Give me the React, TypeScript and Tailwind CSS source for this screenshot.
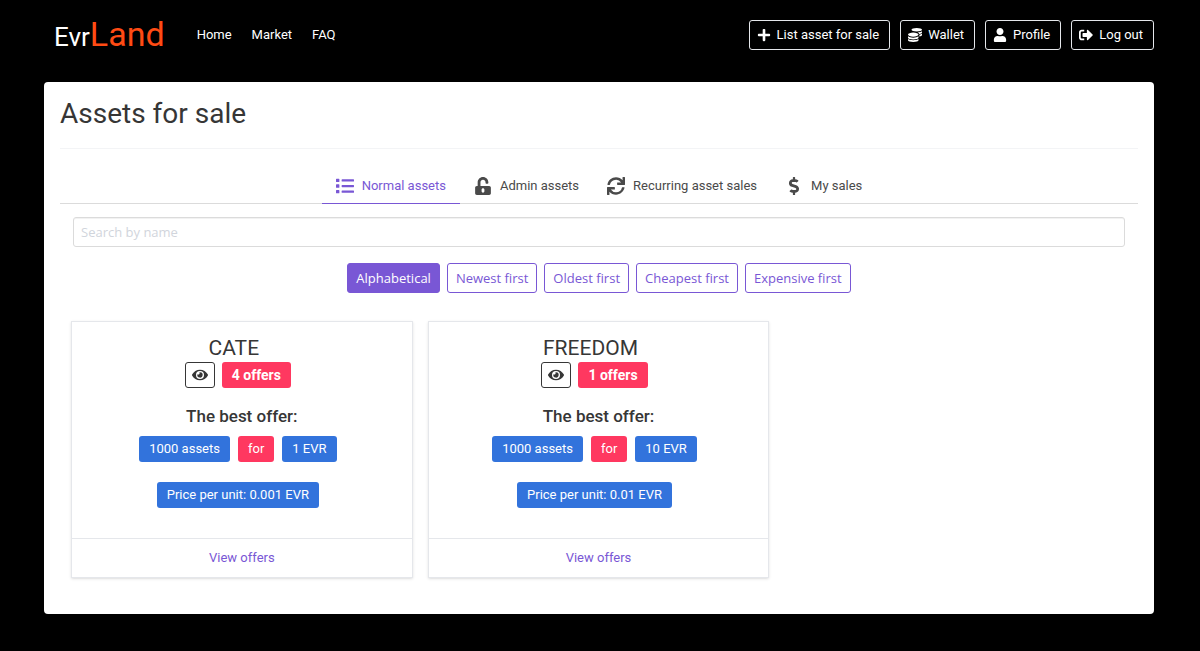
import React from 'react';
import clsx from 'clsx';
import { FaPlus, FaCoins, FaUser, FaSignOutAlt, FaList, FaUnlockAlt, FaSync, FaDollarSign, FaEye } from 'react-icons/fa';

interface Asset {
  name: string;
  offers: number;
  amount: number;
  price: number;
  unitPrice: number;
}

const assets: Asset[] = [
  { name: 'CATE', offers: 4, amount: 1000, price: 1, unitPrice: 0.001 },
  { name: 'FREEDOM', offers: 1, amount: 1000, price: 10, unitPrice: 0.01 },
];

const navLinks = ['Home', 'Market', 'FAQ'];

const actions = [
  { label: 'List asset for sale', icon: <FaPlus size={14} /> },
  { label: 'Wallet', icon: <FaCoins size={14} /> },
  { label: 'Profile', icon: <FaUser size={14} /> },
  { label: 'Log out', icon: <FaSignOutAlt size={14} /> },
];

const tabs = [
  { label: 'Normal assets', icon: <FaList size={18} /> },
  { label: 'Admin assets', icon: <FaUnlockAlt size={18} /> },
  { label: 'Recurring asset sales', icon: <FaSync size={18} /> },
  { label: 'My sales', icon: <FaDollarSign size={18} /> },
];

const sortOptions = ['Alphabetical', 'Newest first', 'Oldest first', 'Cheapest first', 'Expensive first'];

const Tag = ({ children, className }: { children: React.ReactNode; className: string }) => (
  <span className={clsx('flex h-[26px] items-center rounded-[3px] px-[10px] text-white', className)}>{children}</span>
);

const AssetCard = ({ asset }: { asset: Asset }) => (
  <article className="flex flex-col border border-gray-200 text-center shadow-sm">
    <div className="flex flex-col items-center px-5 pt-3 pb-[30px] text-[13px]">
      <h2 className="pr-4 text-[21px] leading-7">{asset.name}</h2>
      <div className="flex gap-[7px] pr-2">
        <button
          aria-label={`Preview ${asset.name}`}
          className="flex h-[26px] w-[30px] items-center justify-center rounded-[3px] border border-[#363636]"
        >
          <FaEye size={16} />
        </button>
        <Tag className="bg-[#ff3860] text-sm font-bold">{asset.offers} offers</Tag>
      </div>
      <h3 className="mt-4 text-[17px] leading-6 font-medium">The best offer:</h3>
      <div className="mt-2 flex gap-2 pr-2">
        <Tag className="bg-[#3273dc]">{asset.amount} assets</Tag>
        <Tag className="bg-[#ff3860]">for</Tag>
        <Tag className="bg-[#3273dc]">{asset.price} EVR</Tag>
      </div>
      <div className="mt-5 flex pr-2">
        <Tag className="bg-[#3273dc]">Price per unit: {asset.unitPrice} EVR</Tag>
      </div>
    </div>
    <a href="#" className="border-t border-gray-200 py-[9px] text-[13px] leading-5 text-[#7957d5]">
      View offers
    </a>
  </article>
);

export default function App() {
  return (
    <div className="min-h-screen bg-black pr-[46px] pb-9 pl-11 font-[Roboto,sans-serif] text-[#363636]">
      {/* Navbar */}
      <header className="flex h-[70px] items-center justify-between text-[13px] text-white">
        <div className="flex items-center">
          <a href="#" className="pl-[10px] text-[26px] leading-9">
            Evr<span className="text-[34px] text-[#ff4b14]">Land</span>
          </a>
          <nav className="ml-8 flex gap-5">
            {navLinks.map((link) => (
              <a key={link} href="#">{link}</a>
            ))}
          </nav>
        </div>
        <div className="flex gap-[10px]">
          {actions.map(({ label, icon }) => (
            <button key={label} className="flex h-[30px] items-center gap-[6px] rounded-[3px] border border-gray-200 pr-[10px] pl-[7px]">
              {icon}
              {label}
            </button>
          ))}
        </div>
      </header>

      <main className="mt-3 rounded bg-white px-4 pb-9">
        <h1 className="pt-3 text-[28px] leading-10">Assets for sale</h1>
        <hr className="mt-[14px] border-gray-100" />

        {/* Tabs */}
        <div role="tablist" className="mt-5 flex justify-center border-b border-[#dbdbdb] text-[13px] text-[#4a4a4a]">
          {tabs.map(({ label, icon }, i) => (
            <button
              key={label}
              role="tab"
              aria-selected={i === 0}
              className={clsx('-mb-px flex h-[35px] items-center gap-2 border-b px-[14px]', i === 0 ? 'border-[#7957d5] text-[#7957d5]' : 'border-transparent')}
            >
              {icon}
              {label}
            </button>
          ))}
        </div>

        <div className="px-[13px] pt-[13px] font-['Open_Sans',sans-serif] text-[13px]">
          <input
            type="text"
            aria-label="Search by name"
            placeholder="Search by name"
            className="h-[30px] w-full rounded-[3px] border border-[#dbdbdb] px-[7px] inset-shadow-2xs placeholder:text-gray-300"
          />
        </div>

        <div className="mt-4 flex justify-center gap-[7px] font-['Open_Sans',sans-serif] text-[13px]">
          {sortOptions.map((option, i) => (
            <button
              key={option}
              className={clsx('h-[30px] rounded-[3px] border border-[#7957d5] px-2 pt-0.5', i === 0 ? 'bg-[#7957d5] text-white' : 'text-[#7957d5]')}
            >
              {option}
            </button>
          ))}
        </div>

        <div className="mt-7 grid grid-cols-3 gap-[15px] pr-3 pl-[11px]">
          {assets.map((asset) => (
            <AssetCard key={asset.name} asset={asset} />
          ))}
        </div>
      </main>
    </div>
  );
}
